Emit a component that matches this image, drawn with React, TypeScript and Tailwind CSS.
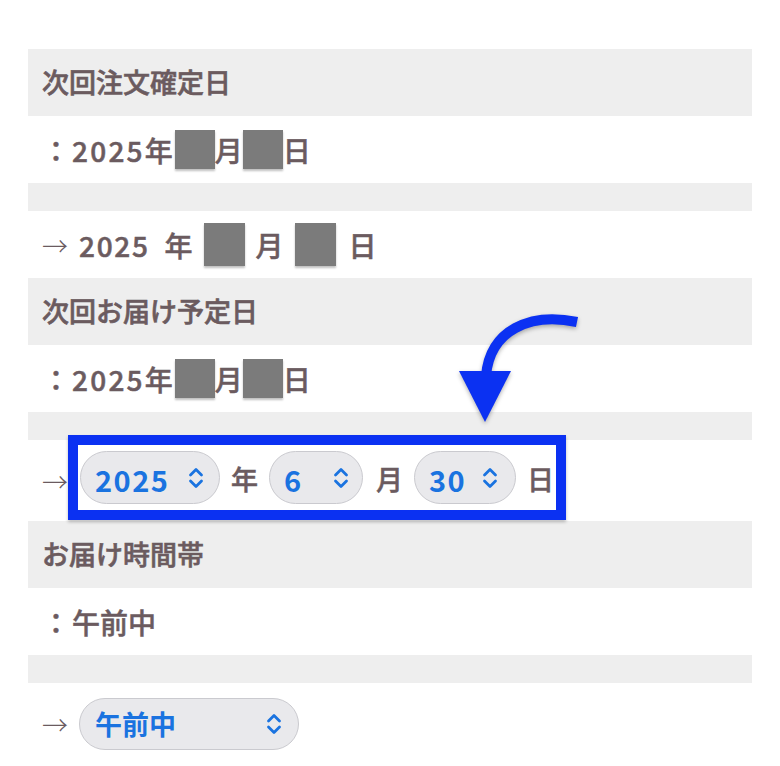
import React from "react";

const font = { fontFamily: '"Noto Sans CJK JP", "Noto Sans", sans-serif' };

function Chevrons() {
	return (
		<svg width="18" height="26" viewBox="0 0 18 26" fill="none" stroke="#1a73e0" strokeWidth="2.8" strokeLinecap="round" strokeLinejoin="round">
			<path d="M3.5 10 L9 4.5 L14.5 10" />
			<path d="M3.5 16 L9 21.5 L14.5 16" />
		</svg>
	);
}

function Select({ value, width, pad = "pr-[14px]" }: { value: string; width: string; pad?: string }) {
	return (
		<div className={`${width} h-[53px] rounded-full bg-[#e9e9ec] border-[1.5px] border-[#cacacf] flex items-center justify-between pl-[14px] ${pad}`}>
			<span className="text-[29px] font-bold text-[#1a73e0] tracking-[0.05em] leading-none mt-[3px] [-webkit-text-stroke:0px]">{value}</span>
			<Chevrons />
		</div>
	);
}

function Redact({ big }: { big?: boolean }) {
	return (
		<span
			className={`inline-block bg-[#7b7b7b] shadow-[0_2px_2px_rgba(0,0,0,0.25)] ${big ? "w-[41px] h-[43px]" : "w-[40px] h-[39px]"}`}
		/>
	);
}

function Header({ children }: { children: React.ReactNode }) {
	return (
		<div className="h-[67px] bg-[#eeeeee] flex items-center pl-[14px] text-[27px] font-medium text-[#6b5b5f] [-webkit-text-stroke:0.6px_#6b5b5f]">
			{children}
		</div>
	);
}

function Spacer() {
	return <div className="h-[28px] bg-[#eeeeee]" />;
}

function Arrow() {
	return <span className="text-[26px] font-light text-[#6b5b5f] leading-none [-webkit-text-stroke:0px]">→</span>;
}

function CurrentDate() {
	return (
		<div className="h-[67px] flex items-center pl-[14px] text-[28px] font-medium text-[#6b5b5f] [-webkit-text-stroke:0.5px_#6b5b5f]">
			<span className="mr-[2px]">：</span>
			<span className="tracking-[0.08em]">2025</span>
			<span className="mr-[2px]">年</span>
			<Redact />
			<span>月</span>
			<Redact />
			<span>日</span>
		</div>
	);
}

export default function App() {
	return (
		<div className="relative w-[780px] h-[766px] bg-white overflow-hidden" style={font}>
			<div className="pt-[49px] px-[28px]">
				<Header>次回注文確定日</Header>
				<CurrentDate />
				<Spacer />
				<div className="h-[67px] flex items-center pl-[14px] gap-[11px] text-[28px] font-medium text-[#6b5b5f]">
					<Arrow />
					<span className="tracking-[0.06em] [-webkit-text-stroke:0.5px_#6b5b5f]">2025</span>
					<span className="ml-[4px] [-webkit-text-stroke:0.5px_#6b5b5f]">年</span>
					<Redact big />
					<span className="[-webkit-text-stroke:0.5px_#6b5b5f]">月</span>
					<Redact big />
					<span className="ml-[2px] [-webkit-text-stroke:0.5px_#6b5b5f]">日</span>
				</div>

				<Header>次回お届け予定日</Header>
				<CurrentDate />
				<Spacer />
				<div className="h-[81px] flex items-center pl-[14px]">
					<Arrow />
					<div className="relative -top-[3px] h-[85px] border-[10px] border-[#0b31f2] flex items-center gap-[11px] pl-[2px] pr-[2px] shadow-[0_2px_3px_rgba(0,0,0,0.25)] text-[27px] font-medium text-[#6b5b5f]">
						<Select value="2025" width="w-[140px]" />
						<span className="mt-[3px] [-webkit-text-stroke:0.5px_#6b5b5f]">年</span>
						<Select value="6" width="w-[94px]" pad="pr-[12px]" />
						<span className="ml-[2px] mt-[3px] [-webkit-text-stroke:0.5px_#6b5b5f]">月</span>
						<Select value="30" width="w-[102px]" pad="pr-[16px]" />
						<span className="mt-[3px] [-webkit-text-stroke:0.5px_#6b5b5f]">日</span>
					</div>
				</div>

				<Header>お届け時間帯</Header>
				<div className="h-[67px] flex items-center pl-[14px] text-[28px] font-medium text-[#6b5b5f] [-webkit-text-stroke:0.5px_#6b5b5f]">
					<span className="mr-[2px]">：</span>
					<span>午前中</span>
				</div>
				<Spacer />
				<div className="h-[81px] flex items-center pl-[14px] gap-[11px]">
					<Arrow />
					<div className="w-[220px] h-[52px] rounded-full bg-[#e9e9ec] border-[1.5px] border-[#cacacf] flex items-center justify-between pl-[15px] pr-[15px]">
						<span className="text-[27px] font-bold text-[#1a73e0] leading-none">午前中</span>
						<Chevrons />
					</div>
				</div>
			</div>

			{/* annotation arrow */}
			<svg
				className="absolute left-[440px] top-[300px] drop-shadow-[0_2px_2px_rgba(0,0,0,0.3)]"
				width="150"
				height="130"
				viewBox="440 300 150 130"
			>
				<path d="M577 322 C 530 312 490 330 486 376" fill="none" stroke="#0b31f2" strokeWidth="10" />
				<polygon points="459,371 511,371 485,422" fill="#0b31f2" />
			</svg>
		</div>
	);
}
